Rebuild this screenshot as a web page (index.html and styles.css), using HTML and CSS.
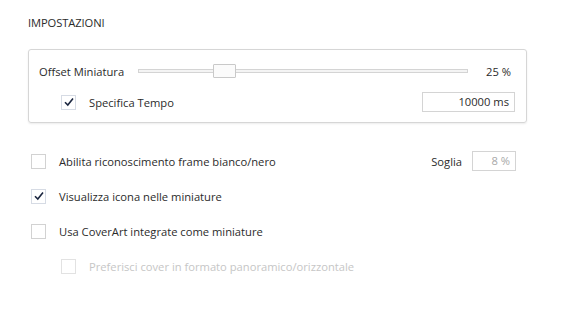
FILE: index.html
```html
<!DOCTYPE html>
<html lang="it">
<head>
  <meta charset="UTF-8">
  <title>Impostazioni</title>
  <link rel="stylesheet" href="styles.css">
</head>
<body>
  <div class="page">
    <div class="title">IMPOSTAZIONI</div>

    <div class="group">
      <div class="group-row">
        <span class="label">Offset Miniatura</span>
        <div class="slider">
          <div class="track"></div>
          <div class="thumb"></div>
        </div>
        <span class="value">25 %</span>
      </div>
      <div class="group-row indent">
        <span class="check checked">
          <svg width="12" height="12" viewBox="0 0 12 12"><path d="M2 6.2 L4.8 9 L10 2.6" fill="none" stroke="#1c2740" stroke-width="1.6"/></svg>
        </span>
        <span class="label">Specifica Tempo</span>
        <div class="textbox wide">10000 ms</div>
      </div>
    </div>

    <div class="options">
      <div class="option">
        <span class="check"></span>
        <span class="label">Abilita riconoscimento frame bianco/nero</span>
        <span class="soglia">Soglia</span>
        <div class="textbox small">8 %</div>
      </div>
      <div class="option">
        <span class="check checked">
          <svg width="12" height="12" viewBox="0 0 12 12"><path d="M2 6.2 L4.8 9 L10 2.6" fill="none" stroke="#1c2740" stroke-width="1.6"/></svg>
        </span>
        <span class="label">Visualizza icona nelle miniature</span>
      </div>
      <div class="option">
        <span class="check"></span>
        <span class="label">Usa CoverArt integrate come miniature</span>
      </div>
      <div class="option sub disabled">
        <span class="check"></span>
        <span class="label">Preferisci cover in formato panoramico/orizzontale</span>
      </div>
    </div>
  </div>
</body>
</html>
```

FILE: styles.css
```css
body {
  margin: 0;
  background: #fff;
  font-family: "Open Sans", "Noto Sans", sans-serif;
  font-size: 11.2px;
  color: #2b2b2b;
}
.page {
  padding: 15px 38px 0 28px;
}
.title {
  line-height: 16px;
  letter-spacing: -0.1px;
}
.group {
  margin-top: 18px;
  border: 1px solid #d6d6d6;
  border-radius: 3px;
  box-shadow: 0 1px 2px rgba(0, 0, 0, 0.08);
  padding: 10px 11px 9px 10px;
}
.group-row {
  display: flex;
  align-items: center;
  height: 22px;
}
.group-row + .group-row {
  margin-top: 9px;
}
.group-row.indent {
  padding-left: 22px;
}
.slider {
  position: relative;
  width: 330px;
  height: 14px;
  margin-left: 14px;
}
.track {
  position: absolute;
  left: 0;
  right: 0;
  top: 5px;
  height: 2px;
  border: 1px solid #d4d4d4;
  background: #f4f4f4;
}
.thumb {
  position: absolute;
  left: 75px;
  top: 0;
  width: 21px;
  height: 12px;
  border: 1px solid #c9c9c9;
  background: #fbfbfb;
  border-radius: 1px;
}
.value {
  margin-left: auto;
  margin-right: 4px;
}
.check {
  display: inline-flex;
  align-items: center;
  justify-content: center;
  width: 13px;
  height: 13px;
  border: 1px solid #d2d2d2;
  background: #fff;
  flex-shrink: 0;
}
.check.checked {
  border-color: #d6dbe4;
}
.check + .label {
  margin-left: 13px;
}
.textbox {
  margin-left: auto;
  border: 1px solid #d4d4d4;
  height: 18px;
  line-height: 18px;
  text-align: right;
  padding: 0 5px;
}
.textbox.wide {
  width: 81px;
}
.textbox.small {
  margin-left: 10px;
  width: 32px;
  color: #a8a8a8;
}
.options {
  margin-top: 28px;
  padding-right: 11px;
}
.option {
  display: flex;
  align-items: center;
  height: 20px;
  padding-left: 3px;
}
.option + .option {
  margin-top: 15px;
}
.soglia {
  margin-left: auto;
}
.option.sub {
  padding-left: 33px;
}
.option.disabled {
  color: #c6c6c6;
}
.option.disabled .check {
  border-color: #e2e2e2;
}
```
